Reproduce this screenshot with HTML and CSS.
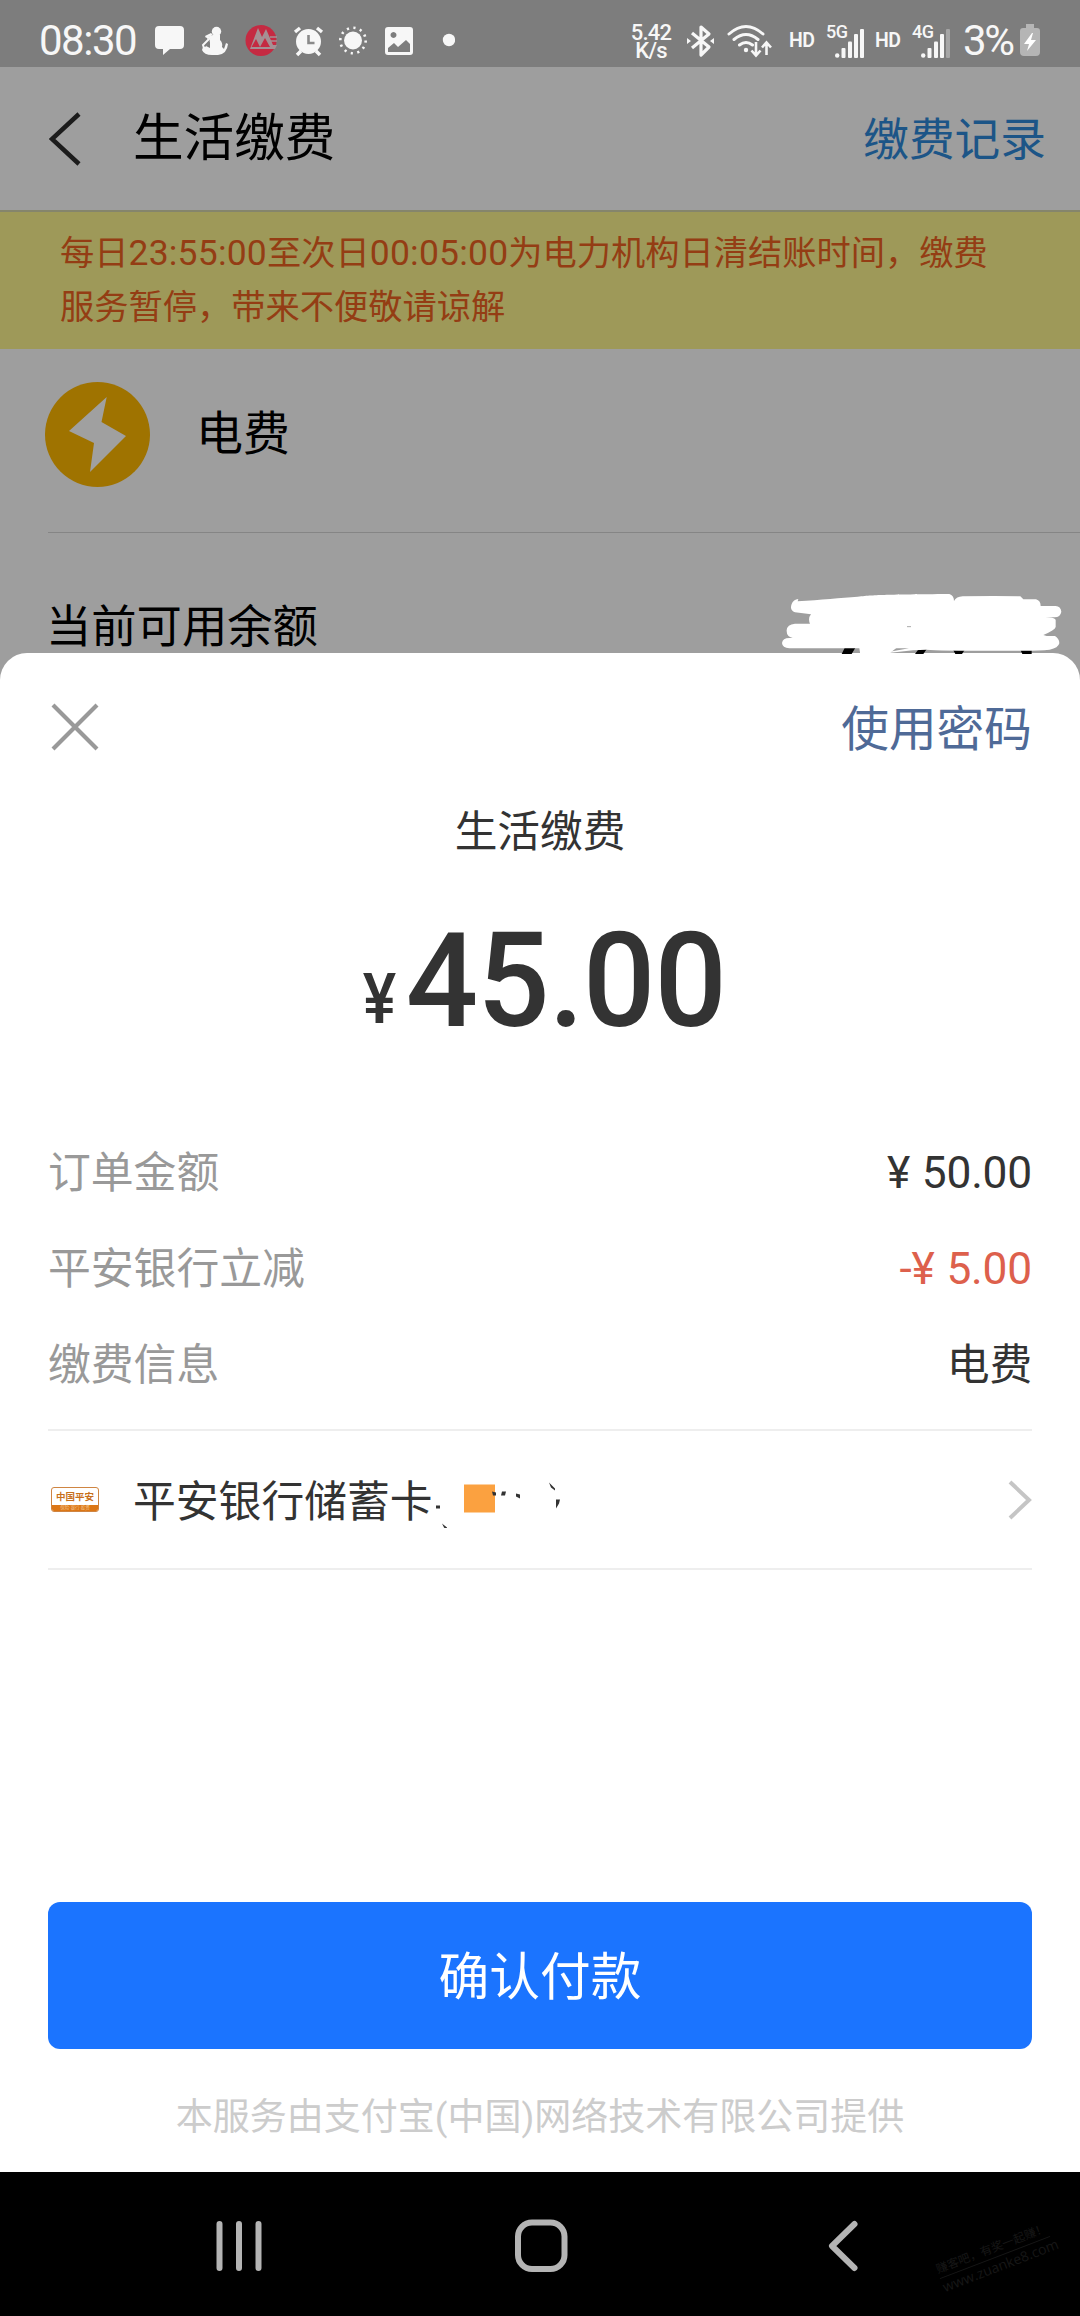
FILE: index.html
```html
<!DOCTYPE html>
<html lang="zh-CN">
<head>
<meta charset="utf-8">
<title>生活缴费</title>
<link rel="stylesheet" href="styles.css">
</head>
<body>
<div class="statusbar">
  <span class="clock">08:30</span>
  <svg class="notif" width="300" height="34" viewBox="155 24 300 34">
    <g fill="#f7f7f7">
      <path d="M159 26h21q4 0 4 4v15q0 4-4 4h-10l-7 6v-6h-4q-4 0-4-4v-15q0-4 4-4z"/>
      <circle cx="216.500" cy="31.500" r="4.700"/>
      <path d="M213 35h7v5q3 3 2 7l2 2 2-6 2 1q-1 10-10 11h-6q-8 0-10-5l1-3h2l5-4q-1-4 1-6l-4 2v-2z"/>
      <path d="M205 36l6-3 2 2-7 3z"/>
      <path d="M211 37l-8 8 1 3" fill="none" stroke="#f7f7f7" stroke-width="2"/>
    </g>
    <path d="M210 42l-4 4 4 2z" fill="#7d7d7d"/>
    <circle cx="261" cy="40.500" r="15.500" fill="#c52a42"/>
    <path d="M250 49l8-21 4 9 4-8 7 16h4l-2 4z" fill="#a59094"/>
    <path d="M251.500 47l4.500-8 4 8zM260 47l5-9 5 9zM260 31l2-3 3 2-3 4z" fill="#c52a42"/>
    <path d="M270 37h7M271 41h6" stroke="#a59094" stroke-width="1.500"/>
    <g fill="none" stroke="#f7f7f7">
      <path d="M295 32l5-4M322 32l-5-4M301 51l-4 4M316 51l4 4" stroke-width="3.500"/>
      <circle cx="308.500" cy="41.500" r="12.500" fill="#f7f7f7" stroke="none"/>
      <path d="M308.500 35v8h6" stroke="#8a8a8a" stroke-width="2.600"/>
      <circle cx="353" cy="40.500" r="9" fill="#f7f7f7" stroke="none"/>
      <circle cx="353" cy="40.500" r="12.700" stroke-width="2.600" stroke-dasharray="2.200 4.450"/>
    </g>
    <path fill="#f7f7f7" fill-rule="evenodd" d="M388 27h22q3 0 3 3v22q0 3-3 3h-22q-3 0-3-3v-22q0-3 3-3zM388 48v4h22v-8l-4-4-8 7-4-4zM393.500 32a3 3 0 1 0 .01 0z"/>
    <circle cx="449" cy="40" r="6.200" fill="#f7f7f7"/>
  </svg>
  <div class="speed"><span>5.42</span><span>K/s</span></div>
  <svg class="radio" width="85" height="34" viewBox="687 24 85 34" fill="none" stroke="#f7f7f7" stroke-width="3.200">
    <path d="M692 33l17 14-8 8V27l8 7-17 14" stroke-linejoin="round"/>
    <path d="M687 38l4 3-4 3zM714 38l-4 3 4 3z" fill="#f7f7f7" stroke="none"/>
    <path d="M729 34q17-15 34 0M734 39.500q12-10 24 0M739.500 45q6.500-5 13 0" stroke-linecap="round" stroke-width="3"/>
    <circle cx="746" cy="50" r="2.200" fill="#f7f7f7" stroke="none"/>
    <path d="M756 42v13M751.500 50.500l4.500 5 4.500-5M766.500 55V43M762 47.500l4.500-5 4.500 5" stroke-width="2.600"/>
  </svg>
  <span class="hd">HD</span>
  <div class="signal"><span class="gen">5G</span>
    <svg width="30" height="29" viewBox="0 0 30 29" fill="#f7f7f7"><circle cx="2.200" cy="26.500" r="2.200"/><rect x="6.500" y="19" width="4" height="10" rx="1"/><rect x="13" y="12.500" width="4" height="16.500" rx="1"/><rect x="19" y="5" width="4" height="24" rx="1"/><rect x="25" width="4" height="29" rx="1"/></svg>
  </div>
  <span class="hd hd-second">HD</span>
  <div class="signal"><span class="gen">4G</span>
    <svg width="30" height="29" viewBox="0 0 30 29" fill="#f7f7f7"><circle cx="2.200" cy="26.500" r="2.200"/><rect x="6.500" y="19" width="4" height="10" rx="1"/><rect x="13" y="12.500" width="4" height="16.500" rx="1"/><rect x="19" y="5" width="4" height="24" rx="1"/><rect x="25" width="4" height="29" rx="1" fill="#a5a5a5"/></svg>
  </div>
  <span class="percent">3%</span>
  <svg class="battery" width="20" height="32" viewBox="0 0 20 32"><path d="M6 0h8v4h3q3 0 3 3v21q0 4-4 4H4q-4 0-4-4V7q0-3 3-3h3z" fill="#b5b5b5"/><path d="M12 9L4 20h5l-2 7 9-11h-5l2-7z" fill="#fff"/></svg>
</div>

<header class="header">
  <svg class="back" width="32" height="54" viewBox="0 0 32 54"><path d="M30 2L3 27l27 25" fill="none" stroke="#1c1c1c" stroke-width="4.500"/></svg>
  <h1 class="title">生活缴费</h1>
  <a class="history">缴费记录</a>
</header>

<div class="notice">每日<span class="digits">23:55:00</span>至次日<span class="digits">00:05:00</span>为电力机构日清结账时间，缴费<br>服务暂停，带来不便敬请谅解</div>

<main class="bill">
  <div class="kind">
    <svg width="105" height="105" viewBox="45 382 105 105"><circle cx="97.500" cy="434.500" r="52.500" fill="#9f7300"/><path d="M106.700 397l-5.200 25L126 436 90 472l4-29-25-12z" fill="#a0a0a0"/></svg>
    <span class="kind-name">电费</span>
  </div>
  <div class="balance">
    <span>当前可用余额</span>
    <svg width="280" height="60" viewBox="123 71 840 180">
      <path d="M302 251l10-20h32l-12 20zM522 251l15-20h24l-14 20zM635 236h38l-10 15h-20zM838 238h34v13h-28z" fill="#000"/>
      <path d="M170 93C240 88 300 83 350 79 410 73 430 73 625 71q14 5 14 21 7-13 26-14 100-2 173 0l9 9h38q14 4 14 20h45q15 1 17 17-3 17-20 17h-28q25 0 31 7v22q-2 9-37 24l10 3h25q13 8 13 22-3 14-29 19-30 3-80 3-240 1-290-3l-40 2-75 8 5-4 58-10H357v12l-2-12H145q-21-1-22-16 2-15 22-15h10q-19-5-18-23 1-18 25-20h45q-7-16 3-28l-48-6q-17-6-10-25 5-14 20-15z" fill="#fff"/>
      <path d="M357 232h110l-20 16h-90z" fill="#fff"/>
      <path d="M498 169h12" stroke="#aaa" stroke-width="3"/>
    </svg>
  </div>
</main>

<section class="sheet">
  <div class="sheet-bar">
    <svg width="48" height="48" viewBox="0 0 48 48"><path d="M2 2l44 44M46 2L2 46" fill="none" stroke="#999" stroke-width="4.200"/></svg>
    <a class="use-password">使用密码</a>
  </div>
  <h2 class="subject">生活缴费</h2>
  <div class="amount"><span class="yen">¥</span><span class="sum">45.00</span></div>
  <dl class="details">
    <div class="row"><dt>订单金额</dt><dd>¥ 50.00</dd></div>
    <div class="row"><dt>平安银行立减</dt><dd class="discount">-¥ 5.00</dd></div>
    <div class="row"><dt>缴费信息</dt><dd class="text">电费</dd></div>
  </dl>
  <div class="card">
    <div class="bank"><span class="bank-name">中国平安</span><span class="bank-tag">保险·银行·投资</span></div>
    <span class="card-name">平安银行储蓄卡</span>
    <svg class="redacted" width="130" height="56" viewBox="434 1472.500 130 56">
      <rect x="464" y="1485" width="31" height="28" fill="#fba140"/>
      <path d="M436 1506h4v3h-4zM492 1492l4 1v3h-3zM502 1492h4l-1 4h-4zM516 1494l4 1v4l-4-2zM549 1483l6 6v2l-4-3zM556 1500h4l-1 4-3 5z M442 1524l5 4v3l-3-3zM439 1491l2-3zM455 1486l2 1z" fill="#333"/>
    </svg>
    <svg class="chevron" width="24" height="40" viewBox="0 0 24 40"><path d="M2 2l19 18L2 38" fill="none" stroke="#c5c5c5" stroke-width="4"/></svg>
  </div>
  <button class="confirm">确认付款</button>
  <p class="provider">本服务由支付宝(中国)网络技术有限公司提供</p>
</section>

<nav class="navbar">
  <svg width="1080" height="144" viewBox="0 2172 1080 144" fill="none" stroke="#b4b4b4" stroke-width="6" stroke-linecap="round">
    <path d="M219.500 2224v44M239 2224v44M258.500 2224v44"/>
    <rect x="518" y="2222.500" width="46.500" height="46.500" rx="14"/>
    <path d="M854.500 2224L832 2246l22.500 22" stroke-linejoin="round"/>
  </svg>
  <div class="watermark"><span class="slogan">赚客吧，有奖一起赚！</span><span class="site">www.zuanke8.com</span></div>
</nav>
</body>
</html>
```
FILE: styles.css
```css
* { box-sizing: border-box; margin: 0; padding: 0; }

body {
  width: 1080px;
  height: 2316px;
  overflow: hidden;
  background: #9e9e9e;
  color: #000;
  font-family: Roboto, "Noto Sans CJK SC", sans-serif;
}

svg { display: block; flex: none; }

/* System status bar */
.statusbar {
  display: flex;
  align-items: flex-start;
  height: 67px;
  padding-top: 24px;
  background: #7d7d7d;
  color: #f7f7f7;
  white-space: nowrap;
}
.clock { width: 116px; padding-left: 39px; font-size: 42px; line-height: 33px; letter-spacing: -1.5px; }
.notif { margin-left: 39px; }
.speed {
  display: flex;
  flex-direction: column;
  width: 40px;
  margin-left: 176px;
  align-items: center;
  font-size: 22px;
  font-weight: 500;
  line-height: 18px;
  letter-spacing: -.8px;
}
.radio { margin-left: 16px; }
.hd { width: 27px; margin-left: 17px; font-size: 19.500px; font-weight: 600; line-height: 34px; letter-spacing: -.5px; }
.hd-second { margin-left: 10px; }
.signal { position: relative; width: 38px; height: 34px; margin-left: 11px; padding: 5px 0 0 8px; }
.gen { position: absolute; left: -1px; top: 0; font-size: 18px; font-weight: 500; line-height: 15px; letter-spacing: -.5px; }
.percent { margin-left: 12px; font-size: 42px; line-height: 33px; letter-spacing: -2.3px; }
.battery { margin-left: 7px; }

/* Dimmed page */
.header {
  display: flex;
  align-items: center;
  height: 145px;
  padding: 0 34px 0 49px;
  border-bottom: 2px solid #85856c;
}
.title { margin: 1px 0 0 52px; font-size: 50.600px; font-weight: 400; line-height: 60px; }
.history { margin: 5px 0 0 auto; color: #1c5587; font-size: 45.700px; line-height: 60px; }
.notice {
  height: 137px;
  padding: 14px 60px;
  background: #9e9959;
  color: #943d14;
  font-size: 34.250px;
  line-height: 54px;
  white-space: nowrap;
}
.digits { font-size: 35.500px; letter-spacing: .2px; }
.kind {
  display: flex;
  align-items: center;
  gap: 46px;
  height: 184px;
  margin-left: 48px;
  padding-bottom: 12px;
  border-bottom: 1px solid #858585;
  font-size: 47px;
}
.kind svg { margin-left: -3px; }
.kind-name { margin-bottom: 10px; }
.balance {
  display: flex;
  justify-content: space-between;
  align-items: flex-start;
  height: 120px;
  padding: 61px 18px 0 46px;
  font-size: 45.300px;
  line-height: 67px;
}

/* Payment sheet */
.sheet {
  display: flex;
  flex-direction: column;
  height: 1519px;
  padding: 42px 48px 0;
  border-radius: 27px 27px 0 0;
  background: #fff;
  color: #333;
}
.sheet > * { flex: none; }
.sheet-bar { display: flex; justify-content: space-between; align-items: center; height: 64px; padding-left: 3px; }
.use-password { margin-bottom: 3px; color: #4f6a97; font-size: 47.700px; }
.subject { margin-top: 43px; font-size: 42.700px; font-weight: 400; line-height: 60px; text-align: center; }
.amount { display: flex; justify-content: center; align-items: baseline; height: 150px; margin-top: 44px; padding-left: 12px; line-height: 150px; }
.yen { margin: 0 2px 0 0; font-size: 70px; font-weight: 500; transform: translateY(-3px) scaleX(.9); }
.sum { font-size: 132px; font-weight: 500; letter-spacing: -1px; transform: scaleX(.965); }
.details { height: 309px; margin-top: 66px; padding-top: 3px; border-bottom: 2px solid #eee; }
.row { display: flex; justify-content: space-between; height: 96px; line-height: 96px; }
.row dt { color: #999; font-size: 42.800px; }
.row dd { font-size: 44.300px; letter-spacing: -.2px; word-spacing: 1px; }
.row dd.text { font-size: 42.800px; }
.row dd.discount { color: #dd604c; }
.card { display: flex; align-items: center; height: 139px; padding-left: 3px; border-bottom: 2px solid #eee; font-size: 42.800px; }
.bank {
  display: flex;
  flex-direction: column;
  width: 48px;
  height: 25px;
  overflow: hidden;
  border: 1px solid #cf8542;
  border-radius: 3px;
  color: #c8701c;
  text-align: center;
  white-space: nowrap;
}
.bank-name { height: 17px; font-size: 9.500px; font-weight: 700; line-height: 17px; }
.bank-tag { height: 7px; background: #dc7615; color: #f3c897; font-size: 4.500px; line-height: 6px; }
.card-name { margin: 0 0 3px 34px; }
.redacted { margin-left: 1px; }
.chevron { margin-left: auto; }
.confirm {
  height: 147px;
  margin-top: 332px;
  padding-top: 4px;
  border: 0;
  border-radius: 12px;
  background: #1b74ff;
  color: #fff;
  font: 400 50.700px/143px Roboto, "Noto Sans CJK SC", sans-serif;
}
.provider { margin-top: 39px; color: #ccc; font-size: 37px; line-height: 60px; text-align: center; white-space: nowrap; }

/* System navigation */
.navbar { position: relative; height: 144px; background: #000; }
.watermark {
  position: absolute;
  left: 936px;
  top: 68px;
  display: flex;
  flex-direction: column;
  width: 118px;
  color: #171717;
  transform: rotate(-21deg);
  white-space: nowrap;
}
.slogan { border-bottom: 1px solid #171717; font-size: 11.800px; line-height: 17px; }
.site { font: 14px/17px "Open Sans", sans-serif; }
```
